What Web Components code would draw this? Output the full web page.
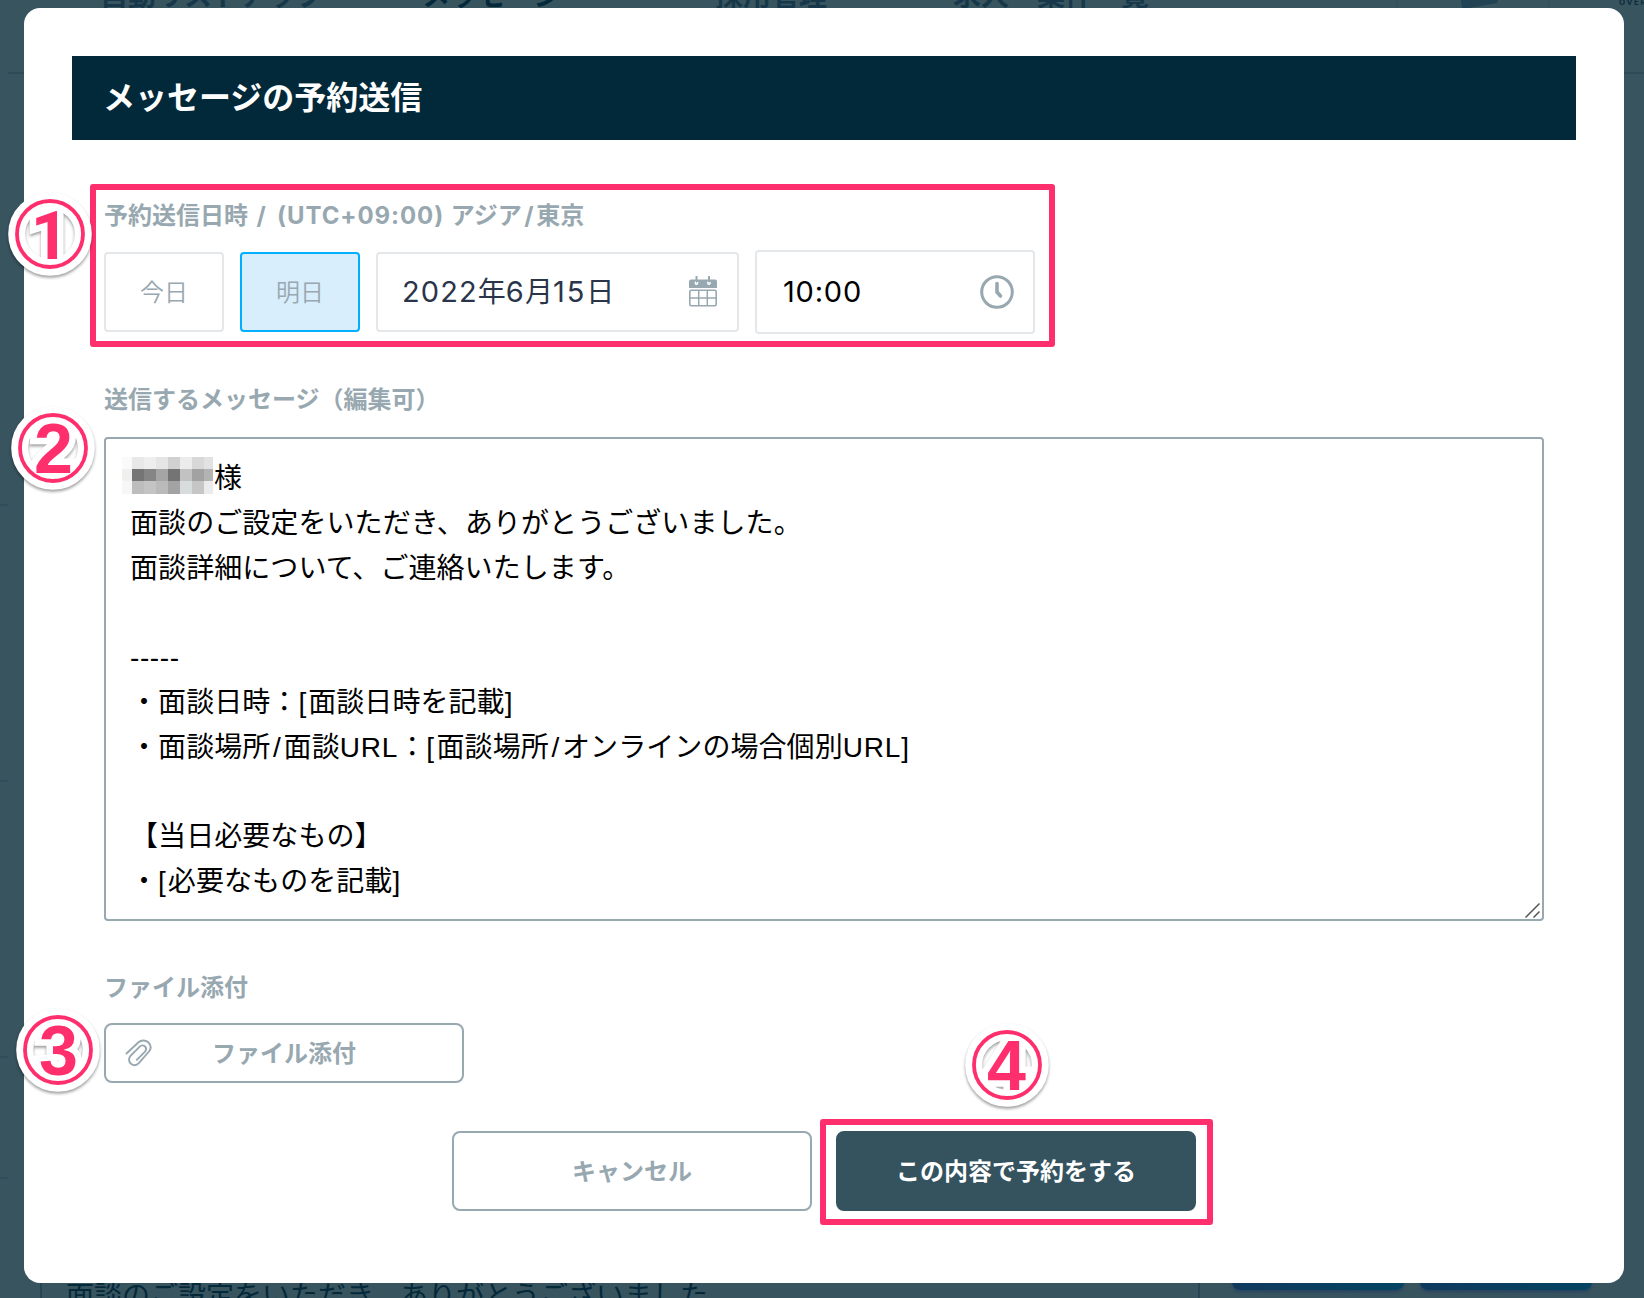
<!DOCTYPE html>
<html lang="ja">
<head>
<meta charset="utf-8">
<title>メッセージの予約送信</title>
<style>
html,body{margin:0;padding:0}
body{width:1644px;height:1298px;overflow:hidden;font-family:"Liberation Sans","Noto Sans CJK JP",sans-serif}
</style>
</head>
<body>
<reserve-page></reserve-page>
<script>
function define(name, html, setup){
  const t=document.createElement('template');
  t.innerHTML=html;
  customElements.define(name,class extends HTMLElement{
    connectedCallback(){
      if(this.shadowRoot)return;
      this.attachShadow({mode:'open'}).appendChild(t.content.cloneNode(true));
      if(setup)setup(this,this.shadowRoot);
    }
  });
}

define('page-backdrop',`
<style>
:host{display:flex;flex-direction:column;justify-content:space-between;width:1644px;height:1298px;background:#38545f;overflow:hidden;color:#17384a}
nav{display:flex;height:74px;flex:none;border-bottom:2px solid #304b57;margin-left:8px;box-sizing:border-box;font:700 28px/28px "Noto Sans CJK JP",sans-serif;white-space:nowrap}
nav span{display:block;margin-top:-20px;width:322px;flex:none}
nav .a{margin-left:92px}
nav .b{width:293px;color:#04293a}
nav .c{width:238px}
nav .d{width:433px}
nav svg{flex:none;width:172px;height:10px}
nav .e{font:700 8px/8px Inter,sans-serif;letter-spacing:1.6px;margin-top:-2px;margin-left:61px;color:#0c2d3c;width:60px}
aside{flex:1;width:8px;display:flex;flex-direction:column}
aside i{display:block;box-sizing:border-box;border-bottom:2px solid #304d59;height:276px}
aside i:first-child{height:432px}
aside i:last-child{height:121px}
footer{display:flex;height:30px;flex:none;align-items:flex-start}
.box{box-sizing:border-box;width:1160px;height:30px;margin-left:40px;border:solid #254555;border-width:0 2px;padding-left:24px;font:400 28px/28px "Noto Sans CJK JP",sans-serif;color:#04293a;white-space:nowrap}
.box span{display:block;margin-top:12px}
.btn{width:172px;height:22px;margin-left:16px;border-radius:0 0 8px 8px;background:linear-gradient(90deg,#0f3a5e,#044462);box-shadow:0 2px 3px #2a4560}
.btn:nth-child(2){margin-left:32px}
</style>
<nav><span class="a">自動リストアップ</span><span class="b">メッセージ</span><span class="c">採用管理</span><span class="d">求人・案件一覧</span>
<svg viewBox="0 0 172 10"><path d="M75 0H112L111 3L83 8H76Z" fill="#214354"/><path d="M11 0V10M163 0V10" stroke="#304d59"/></svg><span class="e">OVERFLOW</span></nav>
<aside><i></i><i></i><i></i><i></i></aside>
<footer><div class="box"><span>面談のご設定をいただき、ありがとうございました</span></div><div class="btn"></div><div class="btn"></div></footer>`);

define('field-label',`
<style>:host{display:block;height:36px;font:700 24px/36px Inter,"Noto Sans CJK JP",sans-serif;color:#98a8b0;white-space:nowrap}</style><slot></slot>`);

define('day-button',`
<style>:host{display:flex;box-sizing:border-box;width:120px;height:80px;border:2px solid #e4e8ea;border-radius:4px;align-items:center;justify-content:center;padding-bottom:2px;font:350 24px/36px "Noto Sans CJK JP",sans-serif;color:#98a8b0;background:#fff}
:host([selected]){background:#d8eefc;border-color:#00b0ff}
</style><slot></slot>`);

define('picker-field',`
<style>:host{display:flex;box-sizing:border-box;width:363px;height:80px;border:2px solid #e4e8ea;border-radius:4px;align-items:center;justify-content:space-between;padding:0 20px 0 24px;font:400 28px/40px Inter,"Noto Sans CJK JP",sans-serif;color:#2a354a}
:host([time]){width:280px;height:84px;color:#000;padding:0 19px 0 26px}
</style><span><slot></slot></span><slot name="icon"></slot>`);

define('icon-calendar',`
<style>:host{display:block;width:28px;height:32px;line-height:0}</style>
<svg width="28" height="32" viewBox="0 0 28 32" fill="none" stroke="#98a8b0"><path d="M0 12V5.500a2 2 0 0 1 2-2H26a2 2 0 0 1 2 2V12Z" fill="#98a8b0" stroke="none"/><rect x=".8" y="14.300" width="26.400" height="15.500" rx="1.500" stroke-width="1.600"/><path d="M9.700 14V30M18.300 14V30M1 22H27" stroke-width="1.500"/><path d="M7 5.500C4.500 8.500 9.500 9.500 8.500 6M19.500 5.500C17 8.500 22 9.500 21 6" stroke="#fff" stroke-width="1.500"/><path d="M7.500 0V6M20 0V6" stroke-width="2"/></svg>`);

define('icon-clock',`
<style>:host{display:block;width:34px;height:34px;line-height:0}</style>
<svg width="34" height="34" viewBox="0 0 34 34" fill="none" stroke="#98a8b0"><circle cx="17" cy="17" r="15.300" stroke-width="3"/><path d="M17 8.500V17L20.500 21" stroke-width="3.600" stroke-linecap="round" stroke-linejoin="round"/></svg>`);

define('icon-clip',`
<style>:host{display:block;width:28px;height:28px;line-height:0}</style>
<svg width="28" height="28" viewBox="0 0 28 28" fill="none" stroke="#98a8b0" stroke-width="1.900" stroke-linecap="round"><path d="M1.500 14.500L13.500 3.300C16 1 20.500 .8 23.200 3.300C26.500 6.500 26 10 24 12.500L13.800 24.200C11.500 26.700 8.500 26.700 6 24.800C3.500 22.700 3.500 19 5.500 16.800L14.500 7.800C16.300 6 18.500 6 20 7.500C21.500 9 21.200 11.200 19.800 12.800L11.800 20.800"/></svg>`);

define('message-area',`
<style>:host{display:flex;box-sizing:border-box;width:1440px;height:484px;border:2px solid #98a8b0;border-radius:4px;padding:18px 24px 0;flex-direction:column;font:400 28px/44.8px "Liberation Sans","Noto Sans CJK JP",sans-serif;letter-spacing:.07px;color:#000;position:relative}
svg{position:absolute;right:1px;bottom:1px}
</style><slot></slot>
<svg width="16" height="16" viewBox="0 0 16 16" fill="none" stroke="#555" stroke-width="1.500"><path d="M.5 15.500L14.500 1.500M8.500 15.500L14.500 9.500"/></svg>`);

define('message-line',`
<style>:host{display:flex;height:44.8px;align-items:center;white-space:pre}</style><slot></slot>`);

define('latin-run',`<style>:host{display:inline-block;white-space:pre}</style><slot></slot>`,(el)=>{
  const a=n=>el.getAttribute(n);
  if(a('gap'))el.style.letterSpacing=a('gap')+'px';
  if(a('pad'))el.style.padding='0 '+a('pad')+'px';
  if(a('size'))el.style.fontSize=a('size')+'px';
});

define('mosaic-name',`
<style>:host{display:block;width:93px;height:37px;margin:-8px -1px 0 -8px;line-height:0}</style>
<svg width="92" height="37" shape-rendering="crispEdges"></svg>`,(el,root)=>{
  const rows=[['#fafafa','#e8e8e8','#eeeeee','#e5e5e5','#d0d0d0','#ececec','#d8d8d8','#e2e2e2'],
    ['#f0f0ef','#757575','#858585','#a5a5a5','#747474','#c2c2c2','#a2a2a2','#b3b3b3'],
    ['#f7f7f7','#bdbdbd','#c4c4c4','#bababa','#a3a3a3','#d9dcdc','#c6c6c6','#ebebeb']];
  const xs=[0,10,22,34,46,58,70,82,91];
  root.querySelector('svg').innerHTML=rows.map((r,j)=>r.map((c,i)=>`<rect x="${xs[i]}" y="${[0,12,24][j]}" width="${xs[i+1]-xs[i]}" height="${[12,12,13][j]}" fill="${c}"/>`).join('')).join('');
});

define('action-button',`
<style>:host{display:flex;box-sizing:border-box;width:360px;height:80px;border:2px solid #98a8b0;border-radius:8px;align-items:center;justify-content:center;font:700 24px/36px "Noto Sans CJK JP",sans-serif;color:#98a8b0;background:#fff}
:host([attach]){height:60px;justify-content:flex-start;padding-left:19px;gap:59px}
:host([primary]){background:#34535f;border-color:#34535f;color:#fff}
span{padding-bottom:3px}
</style><slot name="icon"></slot><span><slot></slot></span>`);

define('red-frame',`
<style>:host{display:block;position:absolute;box-sizing:border-box;border:6px solid #ff2f6e;border-radius:3px}</style>`);

define('step-badge',`
<style>:host{display:block;position:absolute;width:100px;height:100px;margin:-50px 0 0 -50px}
g.w{filter:drop-shadow(0 2px 1.500px rgba(0,0,0,.38))}
text{font-weight:700;text-anchor:middle}</style>
<svg width="100" height="100" viewBox="0 0 100 100"><circle cx="50" cy="50" r="30" fill="#fff"/>
<g class="w"><circle cx="50" cy="50" r="33.300" fill="none" stroke="#fff" stroke-width="17"/><text class="o" stroke="#fff" stroke-width="13" fill="#fff"></text></g>
<circle cx="50" cy="50" r="33" fill="none" stroke="#ff2f6e" stroke-width="3.800"/><text class="i" fill="#ff2f6e"></text></svg>`,(el,root)=>{
  const n=el.getAttribute('n');
  root.querySelectorAll('text').forEach(t=>{
    t.textContent=n;
    t.setAttribute('x',n==='1'?50:n==='4'?49.5:50.500);
    t.setAttribute('y',n==='1'?75:74.5);
    t.style.fontFamily=n==='1'?'Roboto, sans-serif':'"Liberation Sans", sans-serif';
    t.style.fontSize=n==='1'?'67px':'70px';
  });
  /* The outline copy only backs the digit, so it is hidden from readers */
  root.querySelector('.o').setAttribute('aria-hidden','true');
});

define('reserve-dialog',`
<style>
:host{display:flex;box-sizing:border-box;flex-direction:column;width:1600px;height:1275px;padding:48px;background:#fff;border-radius:16px}
header{height:84px;background:#02293a;color:#fff;font:700 32px/84px "Noto Sans CJK JP",sans-serif;padding-left:31px;flex:none}
header span{display:block;margin-top:-3px}
main{display:flex;flex-direction:column;padding:0 32px}
.l1{margin-top:58px}
.row{display:flex;height:84px;align-items:center;gap:16px;margin-top:16px}
.l2{margin-top:48px}
message-area{margin-top:19px}
.l3{margin-top:49px}
.at{margin-top:17px}
.actions{display:flex;justify-content:center;gap:24px;margin-top:48px}
</style>
<header><span>メッセージの予約送信</span></header>
<main>
<field-label class="l1">予約送信日時<latin-run gap="2.8"> / </latin-run><latin-run gap=".9">(UTC+09:00)</latin-run><latin-run gap="1"> </latin-run>アジア<latin-run pad="2.5">/</latin-run>東京</field-label>
<div class="row"><day-button>今日</day-button><day-button selected>明日</day-button>
<picker-field><latin-run size="29" gap="1.1">2022</latin-run>年<latin-run size="29" gap="1.1">6</latin-run>月<latin-run size="29" gap="2">15</latin-run>日<icon-calendar slot="icon"></icon-calendar></picker-field>
<picker-field time><latin-run size="29" gap=".8">10:00</latin-run><icon-clock slot="icon"></icon-clock></picker-field></div>
<field-label class="l2">送信するメッセージ（編集可）</field-label>
<message-area>
<message-line><mosaic-name></mosaic-name>様</message-line>
<message-line>面談のご設定をいただき、ありがとうございました。</message-line>
<message-line>面談詳細について、ご連絡いたします。</message-line>
<message-line></message-line>
<message-line><latin-run gap=".6">-----</latin-run></message-line>
<message-line>・面談日時：<latin-run gap="2">[</latin-run>面談日時を記載<latin-run gap="0">]</latin-run></message-line>
<message-line>・面談場所<latin-run pad="2.7">/</latin-run>面談<latin-run gap=".8">URL</latin-run>：<latin-run gap="2.5">[</latin-run>面談場所<latin-run pad="2.7">/</latin-run>オンラインの場合個別<latin-run gap=".8">URL</latin-run>]</message-line>
<message-line></message-line>
<message-line>【当日必要なもの】</message-line>
<message-line>・<latin-run gap="2">[</latin-run>必要なものを記載]</message-line>
</message-area>
<field-label class="l3">ファイル添付</field-label>
<action-button class="at" attach><icon-clip slot="icon"></icon-clip>ファイル添付</action-button>
<div class="actions"><action-button>キャンセル</action-button><action-button primary>この内容で予約をする</action-button></div>
</main>`);

define('reserve-page',`
<style>
:host{display:block;position:relative;width:1644px;height:1298px;overflow:hidden}
reserve-dialog{position:absolute;left:24px;top:8px}
</style>
<page-backdrop></page-backdrop>
<reserve-dialog></reserve-dialog>
<red-frame style="left:90px;top:184px;width:965px;height:163px"></red-frame>
<red-frame style="left:820px;top:1118.500px;width:393px;height:106px"></red-frame>
<step-badge n="1" style="left:50px;top:234px"></step-badge>
<step-badge n="2" style="left:53px;top:448px"></step-badge>
<step-badge n="3" style="left:58px;top:1050px"></step-badge>
<step-badge n="4" style="left:1007px;top:1065px"></step-badge>`);
</script>
</body>
</html>
